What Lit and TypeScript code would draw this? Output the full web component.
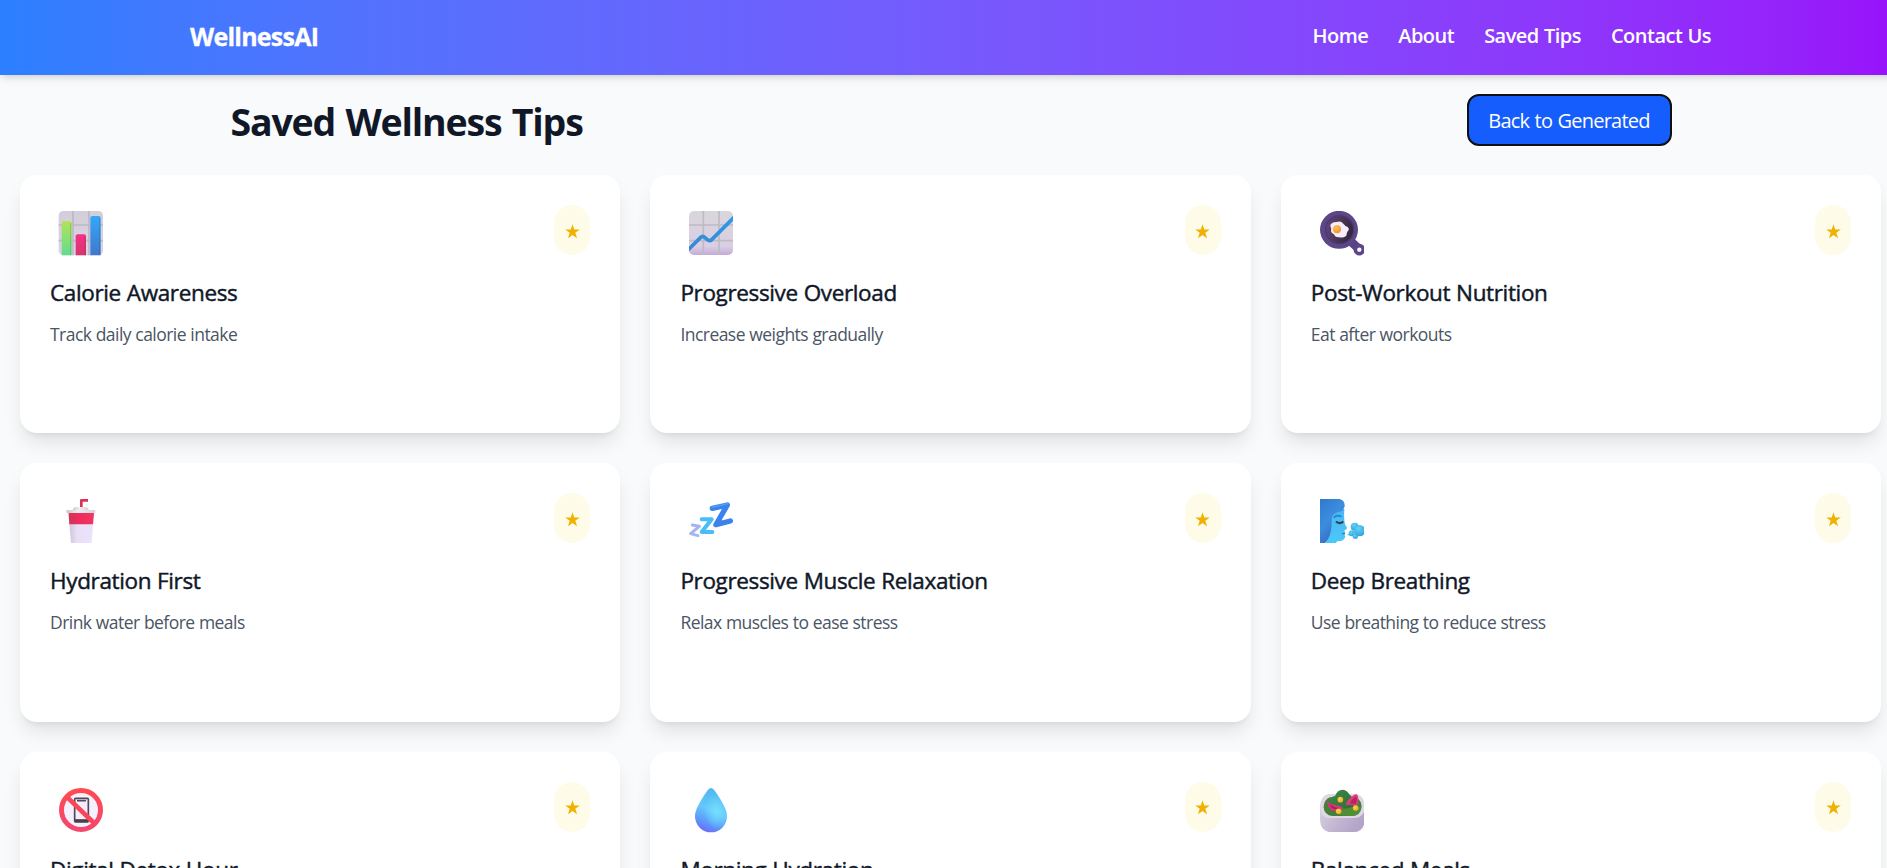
import { LitElement, html, css, svg } from "lit";
import { customElement, property } from "lit/decorators.js";

const icons = {
  chart: svg`
    <defs>
      <linearGradient id="bg" x1="0" y1="0" x2="0" y2="1"><stop offset="0" stop-color="#d3ced9"/><stop offset="1" stop-color="#dbd3e6"/></linearGradient>
      <linearGradient id="gr" x1="0" y1="0" x2="0" y2="1"><stop offset="0" stop-color="#b0e356"/><stop offset="1" stop-color="#62dc90"/></linearGradient>
      <linearGradient id="rd" x1="0" y1="0" x2="0" y2="1"><stop offset="0" stop-color="#f4318a"/><stop offset="1" stop-color="#d5366b"/></linearGradient>
      <linearGradient id="bl" x1="0" y1="0" x2="0" y2="1"><stop offset="0" stop-color="#35a8f8"/><stop offset="1" stop-color="#3f78cc"/></linearGradient>
    </defs>
    <rect x="2" y="0" width="133" height="133" rx="14" fill="url(#bg)"/>
    <path d="M45 0V133M93 0V133M2 42H135M2 89H135" stroke="#bdb9c4" stroke-width="5"/>
    <path d="M11 133V37q0-6 6-6h18q6 0 6 6v96z" fill="url(#gr)"/>
    <path d="M53 133V76q0-6 6-6h19q6 0 6 6v57z" fill="url(#rd)"/>
    <path d="M97 133V21q0-6 6-6h19q6 0 6 6v112z" fill="url(#bl)"/>
    <path d="M38 36V133M81 76V133M125 20V133" stroke="#000" stroke-opacity=".1" stroke-width="4"/>`,
  trend: svg`
    <defs>
      <linearGradient id="bg" x1="0" y1="0" x2="0" y2="1"><stop offset="0" stop-color="#d9d6dc"/><stop offset=".8" stop-color="#d9cfe4"/><stop offset="1" stop-color="#c3abd8"/></linearGradient>
      <linearGradient id="ln" x1="0" y1="1" x2="1" y2="0"><stop offset="0" stop-color="#3a87d2"/><stop offset="1" stop-color="#2b9ae8"/></linearGradient>
      <clipPath id="cp"><rect x="3" y="0" width="132" height="132" rx="15"/></clipPath>
    </defs>
    <g clip-path="url(#cp)">
      <rect x="3" y="0" width="132" height="132" fill="url(#bg)"/>
      <path d="M46 0V132M93 0V132M3 42H135M3 89H135" stroke="#bfbbc4" stroke-width="5"/>
      <path d="M0 117L38 79q6-6 12 0l8 7q7 6 14-1L138 19" fill="none" stroke="url(#ln)" stroke-width="11"/>
    </g>`,
  pan: svg`
    <defs>
      <linearGradient id="in" x1="0" y1="0" x2="1" y2=".3"><stop offset="0" stop-color="#65477c"/><stop offset="1" stop-color="#35293f"/></linearGradient>
      <radialGradient id="yk" cx=".4" cy=".35" r=".7"><stop offset="0" stop-color="#ffc53c"/><stop offset="1" stop-color="#ee9036"/></radialGradient>
    </defs>
    <path d="M94 90L118 112" stroke="#5a4285" stroke-width="26"/>
    <circle cx="121" cy="116" r="12" fill="#fff" stroke="#5c4588" stroke-width="11"/>
    <circle cx="60" cy="56.500" r="57" fill="#5d4687"/>
    <circle cx="62" cy="56" r="44" fill="#4d3771"/>
    <circle cx="62" cy="56" r="40" fill="url(#in)"/>
    <path d="M35 40Q42 32 53 33Q66 29 73 38Q78 45 86 48Q93 55 86 61Q82 67 82 74Q72 82 61 79Q48 80 45 70Q33 65 37 54Q32 46 35 40z" fill="#f8ecfc"/>
    <circle cx="54" cy="55" r="12" fill="url(#yk)"/>`,
  cup: svg`
    <defs>
      <linearGradient id="bd" x1="0" y1="0" x2="1" y2="0"><stop offset="0" stop-color="#cdc3d6"/><stop offset=".35" stop-color="#e9dff8"/><stop offset="1" stop-color="#ede2fb"/></linearGradient>
      <linearGradient id="bn" x1="0" y1="0" x2="1" y2="0"><stop offset="0" stop-color="#cf3558"/><stop offset=".4" stop-color="#ee2c5d"/><stop offset="1" stop-color="#f23560"/></linearGradient>
      <linearGradient id="ld" x1="0" y1="0" x2="1" y2="0"><stop offset="0" stop-color="#c9c6ca"/><stop offset=".4" stop-color="#f0eef0"/><stop offset="1" stop-color="#d5d3d7"/></linearGradient>
    </defs>
    <path d="M70 28V4H90" fill="none" stroke="#dc3054" stroke-width="8" stroke-linejoin="round"/>
    <path d="M44 36Q44 24 54 24H83Q92 24 92 36z" fill="url(#ld)"/>
    <path d="M31 40H108L101 132H39z" fill="url(#bd)"/>
    <path d="M32 42H108L105 76H34z" fill="url(#bn)"/>
    <rect x="25" y="33" width="87" height="9" rx="3" fill="url(#ld)"/>`,
  zzz: svg`
    <g fill="none" stroke-linecap="round" stroke-linejoin="round">
      <path d="M13 78L34 82L8 104L30 110" stroke="#a3b5f4" stroke-width="9"/>
      <path d="M41 61H71L41 99H73" stroke="#48bdf8" stroke-width="12"/>
      <path d="M73 28L118 18L84 77L127 66" stroke="#3c82ee" stroke-width="16"/>
      <path d="M72 25L119 14" stroke="#52a4f8" stroke-width="4"/>
    </g>`,
  breath: svg`
    <defs>
      <linearGradient id="hr" x1="0" y1="0" x2=".6" y2="1"><stop offset="0" stop-color="#3179c8"/><stop offset=".5" stop-color="#3b8de0"/><stop offset="1" stop-color="#3b65b8"/></linearGradient>
      <linearGradient id="sk" x1="0" y1="0" x2="0" y2="1"><stop offset="0" stop-color="#48b7f4"/><stop offset="1" stop-color="#4cc8f8"/></linearGradient>
      <radialGradient id="cl" cx=".4" cy=".3" r=".8"><stop offset="0" stop-color="#5ed4fa"/><stop offset="1" stop-color="#329bd2"/></radialGradient>
    </defs>
    <path d="M20 30H76Q74 60 78 76L84 86Q84 92 76 94L79 101L76 107L79 112Q76 126 62 126Q50 126 52 132H20z" fill="url(#sk)"/>
    <path d="M3 0H62Q78 4 77 22Q73 37 58 39Q40 44 38 60Q40 112 18 132H3z" fill="url(#hr)"/>
    <path d="M44 56Q54 46 68 53" fill="none" stroke="#2c7fc4" stroke-width="5"/>
    <path d="M51 67Q60 77 73 68" fill="none" stroke="#34404e" stroke-width="6"/>
    <path d="M69 104H78" stroke="#2384c6" stroke-width="4"/>
    <path d="M84 108L104 96V112z" fill="#55c9f4"/>
    <circle cx="107" cy="83" r="12" fill="url(#cl)"/>
    <circle cx="98" cy="103" r="9" fill="url(#cl)"/>
    <circle cx="109" cy="112" r="8" fill="url(#cl)"/>
    <circle cx="122" cy="95" r="17" fill="url(#cl)"/>`,
  nophone: svg`
    <defs><linearGradient id="rg" x1="0" y1="0" x2="0" y2="1"><stop offset="0" stop-color="#ff4a50"/><stop offset="1" stop-color="#f34870"/></linearGradient></defs>
    <circle cx="69" cy="66" r="58" fill="#f6effd"/>
    <rect x="50" y="31" width="41" height="71" rx="3" fill="#f5edfb" stroke="#504a55" stroke-width="5"/>
    <path d="M50 98H91" stroke="#46404a" stroke-width="9"/>
    <path d="M57 38H84" stroke="#504a55" stroke-width="5"/>
    <path d="M25 25L111 108" stroke="#fa4657" stroke-width="14"/>
    <circle cx="69" cy="66" r="58.500" fill="none" stroke="url(#rg)" stroke-width="15"/>`,
  drop: svg`
    <defs>
      <linearGradient id="dr" x1=".65" y1="0" x2=".35" y2="1"><stop offset="0" stop-color="#4fb4ee"/><stop offset=".5" stop-color="#64c8fb"/><stop offset=".78" stop-color="#5d9bfb"/><stop offset="1" stop-color="#6b6cf8"/></linearGradient>
      <radialGradient id="hl" cx=".68" cy=".52" r=".4"><stop offset="0" stop-color="#74e2fc" stop-opacity=".9"/><stop offset="1" stop-color="#74e2fc" stop-opacity="0"/></radialGradient>
    </defs>
    <path d="M60 5Q69-5 78 5Q100 35 112 62Q117 74 117 85A48 48 0 0 1 21 85Q21 74 26 62Q38 35 60 5z" fill="url(#dr)"/>
    <path d="M60 5Q69-5 78 5Q100 35 112 62Q117 74 117 85A48 48 0 0 1 21 85Q21 74 26 62Q38 35 60 5z" fill="url(#hl)"/>`,
  salad: svg`
    <defs>
      <linearGradient id="bw" x1="0" y1="0" x2="1" y2=".4"><stop offset="0" stop-color="#d8d3df"/><stop offset=".5" stop-color="#c4b8d3"/><stop offset="1" stop-color="#b4a4c8"/></linearGradient>
      <linearGradient id="lf" x1="0" y1="0" x2="1" y2="1"><stop offset="0" stop-color="#3f8a4b"/><stop offset="1" stop-color="#2d6b35"/></linearGradient>
      <radialGradient id="co" cx=".4" cy=".35" r=".7"><stop offset="0" stop-color="#ffd445"/><stop offset="1" stop-color="#e8a82e"/></radialGradient>
    </defs>
    <path d="M3 54H138V92Q136 132 104 132H38Q4 132 3 92z" fill="url(#bw)"/>
    <path d="M28 18H112Q138 26 138 56Q136 90 106 90H34Q4 90 3 56Q4 24 28 18z" fill="#ded8e5"/>
    <path d="M32 28H108Q128 36 128 56Q124 84 98 84H40Q16 82 14 58Q16 34 32 28z" fill="#44803a"/>
    <path d="M32 42Q34 26 48 24Q56 4 72 5Q84 6 92 20Q106 28 104 56L84 62L32 50z" fill="url(#lf)"/>
    <path d="M62 82Q66 60 86 62Q112 50 127 60Q124 82 98 84z" fill="#518f36"/>
    <path d="M24 40Q34 50 60 53Q74 56 70 64Q58 72 40 68Q24 58 24 40z" fill="#d93579"/>
    <path d="M31 49Q44 60 64 60Q50 66 39 61z" fill="#a71f56"/>
    <path d="M80 53Q84 34 104 22Q116 12 118 32Q120 50 110 55Q96 46 80 53z" fill="#df3c80"/>
    <path d="M92 46Q98 34 111 25Q116 40 109 49z" fill="#b82460"/>
    <circle cx="64" cy="35" r="8.500" fill="url(#co)"/>
    <circle cx="59" cy="70" r="8.500" fill="url(#co)"/>
    <circle cx="110" cy="60" r="8.500" fill="url(#co)"/>`,
};

type IconName = keyof typeof icons;

const tips: { icon: IconName; title: string; text: string }[] = [
  { icon: "chart", title: "Calorie Awareness", text: "Track daily calorie intake" },
  { icon: "trend", title: "Progressive Overload", text: "Increase weights gradually" },
  { icon: "pan", title: "Post-Workout Nutrition", text: "Eat after workouts" },
  { icon: "cup", title: "Hydration First", text: "Drink water before meals" },
  { icon: "zzz", title: "Progressive Muscle Relaxation", text: "Relax muscles to ease stress" },
  { icon: "breath", title: "Deep Breathing", text: "Use breathing to reduce stress" },
  { icon: "nophone", title: "Digital Detox Hour", text: "" },
  { icon: "drop", title: "Morning Hydration", text: "" },
  { icon: "salad", title: "Balanced Meals", text: "" },
];

@customElement("tip-card")
class TipCard extends LitElement {
  @property() icon: IconName = "chart";
  @property() heading = "";
  @property() text = "";

  static styles = css`
    :host {
      display: block;
      box-sizing: border-box;
      padding: 30px;
      background: #fff;
      border-radius: 17px;
      box-shadow: 0 12.5px 18.75px -3.75px rgba(0, 0, 0, 0.1), 0 5px 7.5px -5px rgba(0, 0, 0, 0.1);
    }
    .top {
      display: flex;
      justify-content: space-between;
      height: 50px;
      margin-bottom: 20px;
    }
    .icon {
      width: 45px;
      height: 45px;
      margin: 6px 0 0 8px;
    }
    .star {
      display: flex;
      align-items: center;
      justify-content: center;
      width: 36px;
      height: 50px;
      padding: 2px 0 0;
      border: 0;
      border-radius: 18px;
      background: #fefce8;
    }
    .star svg {
      width: 15px;
      height: 15px;
    }
    h3 {
      margin: 0 0 10px;
      font-size: 22.5px;
      line-height: 35px;
      font-weight: 500;
      letter-spacing: -0.36px;
      word-spacing: 0.4px;
      -webkit-text-stroke: 0.45px #101828;
      color: #101828;
    }
    p {
      margin: 0;
      font-size: 17.5px;
      line-height: 28.4px;
      letter-spacing: -0.54px;
      word-spacing: 0.3px;
      color: #4a5565;
    }
  `;

  render() {
    return html`
      <div class="top">
        <svg class="icon" viewBox="0 0 135 135">${icons[this.icon]}</svg>
        <button class="star" aria-label="Remove from saved">
          <svg viewBox="0 0 24 24">
            <path fill="#f0b100" d="M12 .5l2.800 8.400h8.900l-7.200 5.200 2.800 8.500L12 17.400l-7.300 5.200 2.800-8.500L.3 8.900h8.900z" />
          </svg>
        </button>
      </div>
      <h3>${this.heading}</h3>
      <p>${this.text}</p>
    `;
  }
}

@customElement("app-root")
class AppRoot extends LitElement {
  static styles = css`
    :host {
      display: block;
      height: 868px;
      overflow: hidden;
      background: #f9fafb;
      font-family: "Open Sans", "Noto Sans", sans-serif;
    }
    .page {
      width: 1900px;
    }
    header {
      height: 75px;
      background: linear-gradient(to right in oklab, #2b7fff, #9810fa);
      box-shadow: 0 5px 7.5px -1.25px rgba(0, 0, 0, 0.1), 0 2.5px 5px -2.5px rgba(0, 0, 0, 0.1);
      color: #fff;
    }
    .bar {
      display: flex;
      align-items: center;
      justify-content: space-between;
      box-sizing: border-box;
      width: 1600px;
      height: 100%;
      margin: 0 auto;
      padding: 0 39px 3px 40px;
    }
    .brand {
      font-size: 25px;
      line-height: 35px;
      font-weight: 700;
      letter-spacing: -0.76px;
      -webkit-text-stroke: 0.3px #fff;
    }
    nav {
      display: flex;
      gap: 30px;
      font-size: 20px;
      line-height: 30px;
      font-weight: 600;
      letter-spacing: -0.52px;
      word-spacing: 0.5px;
    }
    nav a {
      color: inherit;
      text-decoration: none;
    }
    .heading {
      display: flex;
      align-items: center;
      justify-content: space-between;
      width: 1443px;
      height: 100px;
      margin: 0 auto;
      padding-left: 2px;
      box-sizing: border-box;
    }
    h1 {
      margin: 0;
      padding-bottom: 7px;
      font-size: 37.5px;
      line-height: 45px;
      font-weight: 700;
      letter-spacing: -1.18px;
      word-spacing: 1.8px;
      color: #101828;
    }
    .back {
      box-sizing: border-box;
      width: 205px;
      height: 52px;
      margin-bottom: 10px;
      padding: 0;
      border: 2px solid #101010;
      border-radius: 12px;
      background: #155dfc;
      box-shadow: 0 0 0 1px #fff;
      color: #fff;
      font: inherit;
      font-size: 20px;
      letter-spacing: -0.76px;
      word-spacing: 0.8px;
    }
    main {
      display: grid;
      grid-template-columns: repeat(3, 600.4px);
      grid-auto-rows: 258.400px;
      gap: 30px;
      padding-left: 20px;
    }
  `;

  render() {
    return html`
      <div class="page">
        <header>
          <div class="bar">
            <div class="brand">WellnessAI</div>
            <nav>
              <a href="#">Home</a>
              <a href="#">About</a>
              <a href="#">Saved Tips</a>
              <a href="#">Contact Us</a>
            </nav>
          </div>
        </header>
        <div class="heading">
          <h1>Saved Wellness Tips</h1>
          <button class="back">Back to Generated</button>
        </div>
        <main>
          ${tips.map((t) => html`<tip-card .icon=${t.icon} .heading=${t.title} .text=${t.text}></tip-card>`)}
        </main>
      </div>
    `;
  }
}
